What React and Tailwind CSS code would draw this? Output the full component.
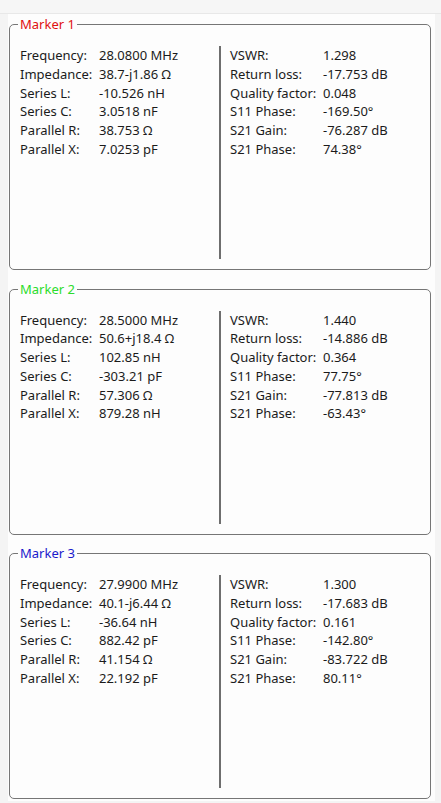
import React from 'react';

const markers = [
  {
    name: 'Marker 1',
    color: 'text-[#e01010]',
    left: [
      ['Frequency:', '28.0800 MHz'],
      ['Impedance:', '38.7-j1.86 Ω'],
      ['Series L:', '-10.526 nH'],
      ['Series C:', '3.0518 nF'],
      ['Parallel R:', '38.753 Ω'],
      ['Parallel X:', '7.0253 pF'],
    ],
    right: [
      ['VSWR:', '1.298'],
      ['Return loss:', '-17.753 dB'],
      ['Quality factor:', '0.048'],
      ['S11 Phase:', '-169.50°'],
      ['S21 Gain:', '-76.287 dB'],
      ['S21 Phase:', '74.38°'],
    ],
  },
  {
    name: 'Marker 2',
    color: 'text-[#2bdc2b]',
    left: [
      ['Frequency:', '28.5000 MHz'],
      ['Impedance:', '50.6+j18.4 Ω'],
      ['Series L:', '102.85 nH'],
      ['Series C:', '-303.21 pF'],
      ['Parallel R:', '57.306 Ω'],
      ['Parallel X:', '879.28 nH'],
    ],
    right: [
      ['VSWR:', '1.440'],
      ['Return loss:', '-14.886 dB'],
      ['Quality factor:', '0.364'],
      ['S11 Phase:', '77.75°'],
      ['S21 Gain:', '-77.813 dB'],
      ['S21 Phase:', '-63.43°'],
    ],
  },
  {
    name: 'Marker 3',
    color: 'text-[#1a1acc]',
    left: [
      ['Frequency:', '27.9900 MHz'],
      ['Impedance:', '40.1-j6.44 Ω'],
      ['Series L:', '-36.64 nH'],
      ['Series C:', '882.42 pF'],
      ['Parallel R:', '41.154 Ω'],
      ['Parallel X:', '22.192 pF'],
    ],
    right: [
      ['VSWR:', '1.300'],
      ['Return loss:', '-17.683 dB'],
      ['Quality factor:', '0.161'],
      ['S11 Phase:', '-142.80°'],
      ['S21 Gain:', '-83.722 dB'],
      ['S21 Phase:', '80.11°'],
    ],
  },
];

// label / value rows of one column
const Rows = ({ rows, labelWidth }) => (
  <div className="flex flex-col">
    {rows.map(([label, value]) => (
      <div key={label} className="flex leading-[18.8px] h-[18.8px] whitespace-nowrap">
        <span className={labelWidth}>{label}</span>
        <span>{value}</span>
      </div>
    ))}
  </div>
);

const MarkerBox = ({ marker }) => (
  <fieldset className="h-[254px] border border-[#767676] rounded-[5px] px-[10px] pb-[10px]">
    <legend className={`-ml-[2px] px-[2px] leading-[17px] ${marker.color}`}>{marker.name}</legend>
    <div className="mt-[13px] h-[213px] flex">
      <div className="w-[199px]">
        <Rows rows={marker.left} labelWidth="w-[79px]" />
      </div>
      <div className="w-[2px] bg-[#6e6e6e]" />
      <div className="pl-[9px]">
        <Rows rows={marker.right} labelWidth="w-[93px]" />
      </div>
    </div>
  </fieldset>
);

const App = () => {
  return (
    <div
      className="w-[441px] h-[803px] bg-[#f4f4f4] text-[13px] text-[#1b1b1b] overflow-hidden"
      style={{ fontFamily: '"Noto Sans", "Open Sans", sans-serif' }}
    >
      <div className="h-[14px] border-b border-[#e8e8e8] bg-[#f6f6f6]" />
      <div className="ml-[8px] w-[427px] h-[787px] bg-[#fdfdfd] pl-[1px] pr-[4px] pt-[2px] flex flex-col gap-[10.5px]">
        {markers.map((m) => (
          <MarkerBox key={m.name} marker={m} />
        ))}
      </div>
    </div>
  );
};

export default App;
